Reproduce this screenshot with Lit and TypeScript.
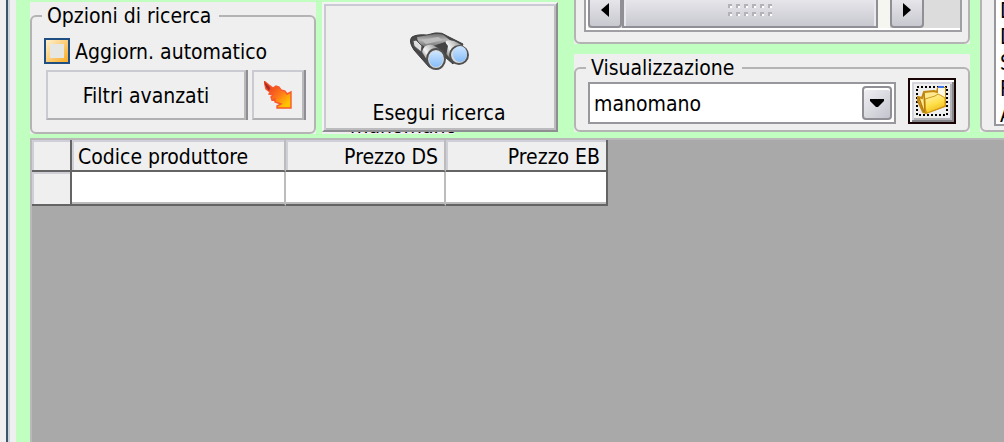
import { LitElement, html, css } from "lit";
import { customElement, property, state } from "lit/decorators.js";

@customElement("group-box")
class GroupBox extends LitElement {
  @property() caption = "";

  static styles = css`
    :host {
      display: flex;
      flex-direction: column;
      background: #efefef;
      box-sizing: border-box;
    }
    .frame {
      flex: 1;
      display: flex;
      flex-direction: column;
      min-width: 0;
      margin: 0;
      padding: 0 8px;
      border: 2px solid #b4b4b4;
      border-radius: 6px;
      box-sizing: border-box;
    }
    .caption {
      height: 28px;
      margin-left: 2px;
      padding: 0 8px 0 5px;
      line-height: 28px;
    }
  `;

  render() {
    return html`<fieldset class="frame">
      ${this.caption ? html`<legend class="caption">${this.caption}</legend>` : null}
      <slot></slot>
    </fieldset>`;
  }
}

@customElement("app-root")
class AppRoot extends LitElement {
  @state() private auto = false;

  private columns = [
    { title: "Codice produttore", kind: "code" },
    { title: "Prezzo DS", kind: "numeric" },
    { title: "Prezzo EB", kind: "numeric last" },
  ];

  private entries = ["D", "D", "S", "F", "A"];

  static styles = css`
    :host {
      display: block;
      height: 100vh;
      overflow: hidden;
      font-family: "DejaVu Sans Condensed", "DejaVu Sans", sans-serif;
      font-size: 21px;
      line-height: 26px;
      color: #000;
    }
    * { box-sizing: border-box; }
    button, select, input { font: inherit; color: inherit; margin: 0; }
    svg { display: block; }
    .window { display: flex; height: 100%; background: #efefef; }
    .edge {
      flex: none;
      width: 10px;
      margin-right: 6px;
      border-left: 6px solid #f0f0f0;
      background: linear-gradient(90deg, #3a556c 2px, #ccd4de 2px);
    }
    .main {
      flex: 1;
      min-width: 0;
      display: flex;
      flex-direction: column;
      padding-left: 14px;
      background: #c1ffc1;
    }
    .toolbar { display: flex; height: 138px; flex: none; overflow: hidden; }
    .options { width: 286px; height: 132px; margin: 2px 6px 0 0; flex: none; }
    .check { display: flex; align-items: center; gap: 5px; height: 26px; margin: 8px 0 6px 4px; }
    .check label { padding-top: 2px; }
    .tick {
      appearance: none;
      flex: none;
      width: 26px;
      height: 26px;
      border: 2px solid #1f4f82;
      background:
        linear-gradient(#e6e6e2, #e6e6e2) center / 14px 14px no-repeat,
        linear-gradient(135deg, #fff0cf, #f9b233 90%);
    }
    .row { display: flex; gap: 6px; margin-left: 6px; }
    .push {
      height: 50px;
      padding: 2px 0 0;
      border: 2px solid #cacad2;
      border-right-color: #b9b9bc;
      border-bottom-color: #b0b0b2;
      background: #efefef;
      box-shadow: 2px 0 #8f8f93;
      display: flex;
      align-items: center;
      justify-content: center;
    }
    .wide { width: 200px; }
    .small { width: 52px; padding: 0; }
    .search { width: 236px; margin-top: 2px; flex: none; }
    .run {
      width: 100%;
      height: 130px;
      padding: 28px 2px 4px 0;
      border: 2px solid #f4f4f4;
      border-right-color: #8f8f93;
      border-bottom-color: #8f8f93;
      background: #efefef;
      box-shadow: inset 2px 2px #cacad2, inset -2px -2px #bcbcbe;
      display: flex;
      flex-direction: column;
      align-items: center;
      justify-content: space-between;
    }
    .under {
      display: flex;
      align-items: flex-end;
      width: 132px;
      height: 2px;
      padding-left: 28px;
      overflow: hidden;
      line-height: 16px;
      background: #efefef;
    }
    .view { flex: 1; min-width: 0; max-width: 396px; margin-left: 16px; }
    .list { height: 52px; margin-top: -8px; }
    .box {
      height: 38px;
      margin-right: -2px;
      border: 2px solid #a0a0a4;
      border-top: 0;
      background: #fff;
      padding: 0 0 2px 2px;
    }
    .scroll { display: flex; height: 34px; background: #dcdcdc; }
    .nudge, .thumb {
      border: 2px solid #8f8f95;
      border-top: 0;
      background: linear-gradient(#ececf0, #c8c8d0);
      padding: 0;
      display: flex;
      align-items: center;
      justify-content: center;
    }
    .nudge { width: 34px; flex: none; border-radius: 0 0 4px 4px; }
    .thumb { flex: 1; min-width: 0; box-shadow: inset 2px 0 #e8e8ee, inset -2px 0 #e8e8ee; }
    .track { width: 12px; background: #f6f6f0; flex: none; }
    .rest { width: 36px; flex: none; }
    .visual { height: 78px; margin-top: 10px; }
    .pick { display: flex; align-items: flex-start; gap: 12px; margin: -4px 4px 0; }
    .combo { position: relative; flex: 1; min-width: 0; margin-top: 4px; }
    .drop {
      appearance: none;
      display: block;
      width: 100%;
      height: 42px;
      padding: 2px 4px 0;
      border: 2px solid #98989c;
      border-radius: 0;
      background: #fff;
    }
    .arrow {
      position: absolute;
      right: 4px;
      top: 4px;
      width: 30px;
      height: 34px;
      border: 2px solid #8f8f95;
      border-radius: 4px;
      background: linear-gradient(135deg, #f0f0f4, #c4c4ce);
      box-shadow: inset 0 2px #fff;
      display: flex;
      align-items: center;
      justify-content: center;
      pointer-events: none;
    }
    .folder {
      flex: none;
      width: 48px;
      height: 46px;
      padding: 0;
      border: 2px solid #180404;
      background: #efefef;
      box-shadow: inset 2px 2px #fff, inset -2px -2px #85858a, inset 4px 4px #d4d4dc, inset -4px -4px #b4b4b8;
      display: flex;
      align-items: center;
      justify-content: center;
    }
    .side { width: 60px; flex: none; height: 140px; margin: -8px -36px 0 10px; }
    .items {
      margin: 0 0 0 4px;
      height: 132px;
      padding: 4px 0 0 4px;
      border: 2px solid #98989c;
      border-top: 0;
      background: #fff;
      list-style: none;
      overflow: hidden;
    }
    .grid { flex: 1; background: #a9a9a9; border: solid #b9b9b9; border-width: 2px 0 0 2px; }
    table { border-collapse: separate; border-spacing: 0; table-layout: fixed; width: 576px; }
    th, td { padding: 0; font-weight: normal; border-bottom: 2px solid #646464; border-right: 2px solid #bcbcbc; }
    th { background: #efefef; box-shadow: inset 2px 2px #cfcfd8; }
    thead th { height: 32px; padding: 4px 6px 0 6px; text-align: left; }
    thead .numeric { width: 160px; text-align: right; }
    tbody th, tbody td { height: 34px; }
    td { background: #fff; box-shadow: inset 0 -2px #bcbcbc; }
    th.stub { border-right-color: #646464; width: 40px; }
    thead .last, td.last { border-right-color: #646464; }
    thead .last { width: 162px; }
  `;

  render() {
    return html`<div class="window">
      <div class="edge"></div>
      <main class="main">
        <div class="toolbar">
          <group-box class="options" caption="Opzioni di ricerca">
            <div class="check">
              <input class="tick" id="auto" type="checkbox" .checked=${this.auto}
                @change=${(e: Event) => (this.auto = (e.target as HTMLInputElement).checked)} />
              <label for="auto">Aggiorn. automatico</label>
            </div>
            <div class="row">
              <button class="push wide">Filtri avanzati</button>
              <button class="push small" aria-label="Filtro rapido">${this.boltIcon()}</button>
            </div>
          </group-box>
          <div class="search">
            <button class="run">${this.binoculars()}<span>Esegui ricerca</span></button>
            <div class="under">manomano</div>
          </div>
          <div class="view">
            <group-box class="list">
              <div class="box"><div class="scroll">
                <button class="nudge" aria-label="Sinistra"><svg width="8" height="14"><path d="M8 0V14L0 7Z" /></svg></button>
                <div class="thumb">${this.grip()}</div>
                <div class="track"></div>
                <button class="nudge" aria-label="Destra"><svg width="8" height="14"><path d="M0 0V14L8 7Z" /></svg></button>
                <div class="rest"></div>
              </div></div>
            </group-box>
            <group-box class="visual" caption="Visualizzazione">
              <div class="pick">
                <div class="combo">
                  <select class="drop" aria-label="Visualizzazione"><option>manomano</option></select>
                  <span class="arrow"><svg width="14" height="8"><path d="M0 0H14V2L8 8H6L0 2Z" /></svg></span>
                </div>
                <button class="folder" aria-label="Apri">${this.folderIcon()}</button>
              </div>
            </group-box>
          </div>
          <group-box class="side">
            <ul class="items">${this.entries.map((e) => html`<li>${e}</li>`)}</ul>
          </group-box>
        </div>
        <div class="grid">
          <table>
            <thead><tr><th class="stub"></th>${this.columns.map((c) => html`<th class=${c.kind}>${c.title}</th>`)}</tr></thead>
            <tbody><tr><th class="stub"></th>${this.columns.map((c) => html`<td class=${c.kind}></td>`)}</tr></tbody>
          </table>
        </div>
      </main>
    </div>`;
  }

  private grip() {
    return html`<svg width="44" height="12" fill="none" stroke-width="4">
      <path d="M0 2H44M0 10H44" stroke="#b2b2b8" stroke-dasharray="4 4" />
      <path d="M2 3H44M2 11H44" stroke="#fff" stroke-width="2" stroke-dasharray="2 6" />
    </svg>`;
  }

  private boltIcon() {
    return html`<svg width="28" height="28" viewBox="0 0 28 28">
      <defs><linearGradient id="heat" x1="0" y1="0" x2="1" y2="1">
        <stop offset="0" stop-color="#9c2424" /><stop offset=".25" stop-color="#f04a20" />
        <stop offset=".55" stop-color="#ff7a18" /><stop offset=".85" stop-color="#ffc400" />
      </linearGradient></defs>
      <path d="M0 0L5 4L9 7L12 5L15 6L17 9L21 10L23 13L27 11V27H13V25L17 23L11 21V18L8 19L7 16L9 14L5 13L6 11L2 8Z"
        fill="url(#heat)" stroke="#f8582c" stroke-width="1.4" />
      <path d="M0 0L6 7L5 10L2 6Z" fill="#a52a2a" />
    </svg>`;
  }

  private binoculars() {
    return html`<svg width="60" height="38" viewBox="0 0 60 38">
      <defs>
        <linearGradient id="body" x1="0" y1="0" x2="0" y2="1">
          <stop offset="0" stop-color="#6c6c6c" /><stop offset=".45" stop-color="#b4b4b4" /><stop offset="1" stop-color="#707070" />
        </linearGradient>
        <linearGradient id="barrel" x1="0" y1=".8" x2="1" y2=".1">
          <stop offset="0" stop-color="#4a4a4a" /><stop offset=".35" stop-color="#f4f4f4" />
          <stop offset=".6" stop-color="#c4c4c4" /><stop offset="1" stop-color="#5a5a5a" />
        </linearGradient>
        <linearGradient id="glass" x1="0" y1="0" x2="0" y2="1">
          <stop offset="0" stop-color="#cfe6ff" /><stop offset="1" stop-color="#86bdf8" />
        </linearGradient>
      </defs>
      <path d="M3 5Q8 2 18 3L26 1Q33 0 38 4L54 12L44 32L36 25L30 37L20 35L5 18Q-1 9 3 5Z" fill="#484848" stroke="#3c3c3c" />
      <path d="M8 5L26 2Q33 1 37 5L42 9L33 12L17 15Q8 12 8 5Z" fill="url(#body)" />
      <path d="M12 8L29 5L34 8L17 12Z" fill="#bcbcbc" />
      <path d="M37 9Q43 7 49 11L58 17L46 31L36 21Z" fill="url(#barrel)" />
      <path d="M13 20Q15 11 24 13L35 20L23 36Z" fill="url(#barrel)" />
      <path d="M4 9L7 8L13 14L12 20L5 14Z" fill="#dedede" stroke="#555" />
      <path d="M27 13L36 10L39 14L37 24L33 19Z" fill="#444" />
      <ellipse cx="50" cy="23" rx="9" ry="9" fill="#d8d8d8" stroke="#505050" stroke-width="2" />
      <ellipse cx="51" cy="22" rx="7" ry="8" fill="url(#glass)" />
      <ellipse cx="27" cy="27" rx="9" ry="10" fill="#d8d8d8" stroke="#505050" stroke-width="2" />
      <ellipse cx="27" cy="27" rx="7" ry="8" fill="url(#glass)" />
    </svg>`;
  }

  private folderIcon() {
    return html`<svg width="32" height="30" viewBox="0 0 32 30">
      <defs><linearGradient id="gold" x1="0" y1="0" x2=".4" y2="1">
        <stop offset="0" stop-color="#fff3bd" /><stop offset=".6" stop-color="#ffe04a" /><stop offset="1" stop-color="#efbd1c" />
      </linearGradient></defs>
      <path d="M1 1H31V29H1Z" fill="none" stroke="#000" stroke-width="2" stroke-dasharray="2 2" />
      <path d="M2 11L6 12L8 6L18 5L21 6L22 2H29V20L10 27L7 26L2 15Z" fill="#ffe98e" stroke="#c48a10" stroke-width="2" />
      <path d="M22 2H29V14L22 10Z" fill="#fff8e2" />
      <path d="M22 1H28" stroke="#3f74e8" stroke-width="2" />
      <path d="M9 13L19 10L22 8L26 10L29 12V20L11 27L9 22Z" fill="url(#gold)" stroke="#d09a18" stroke-width="1" />
      <path d="M8 7L9 26M3 12L8 26" stroke="#b87c0c" stroke-width="1.5" fill="none" />
    </svg>`;
  }
}
